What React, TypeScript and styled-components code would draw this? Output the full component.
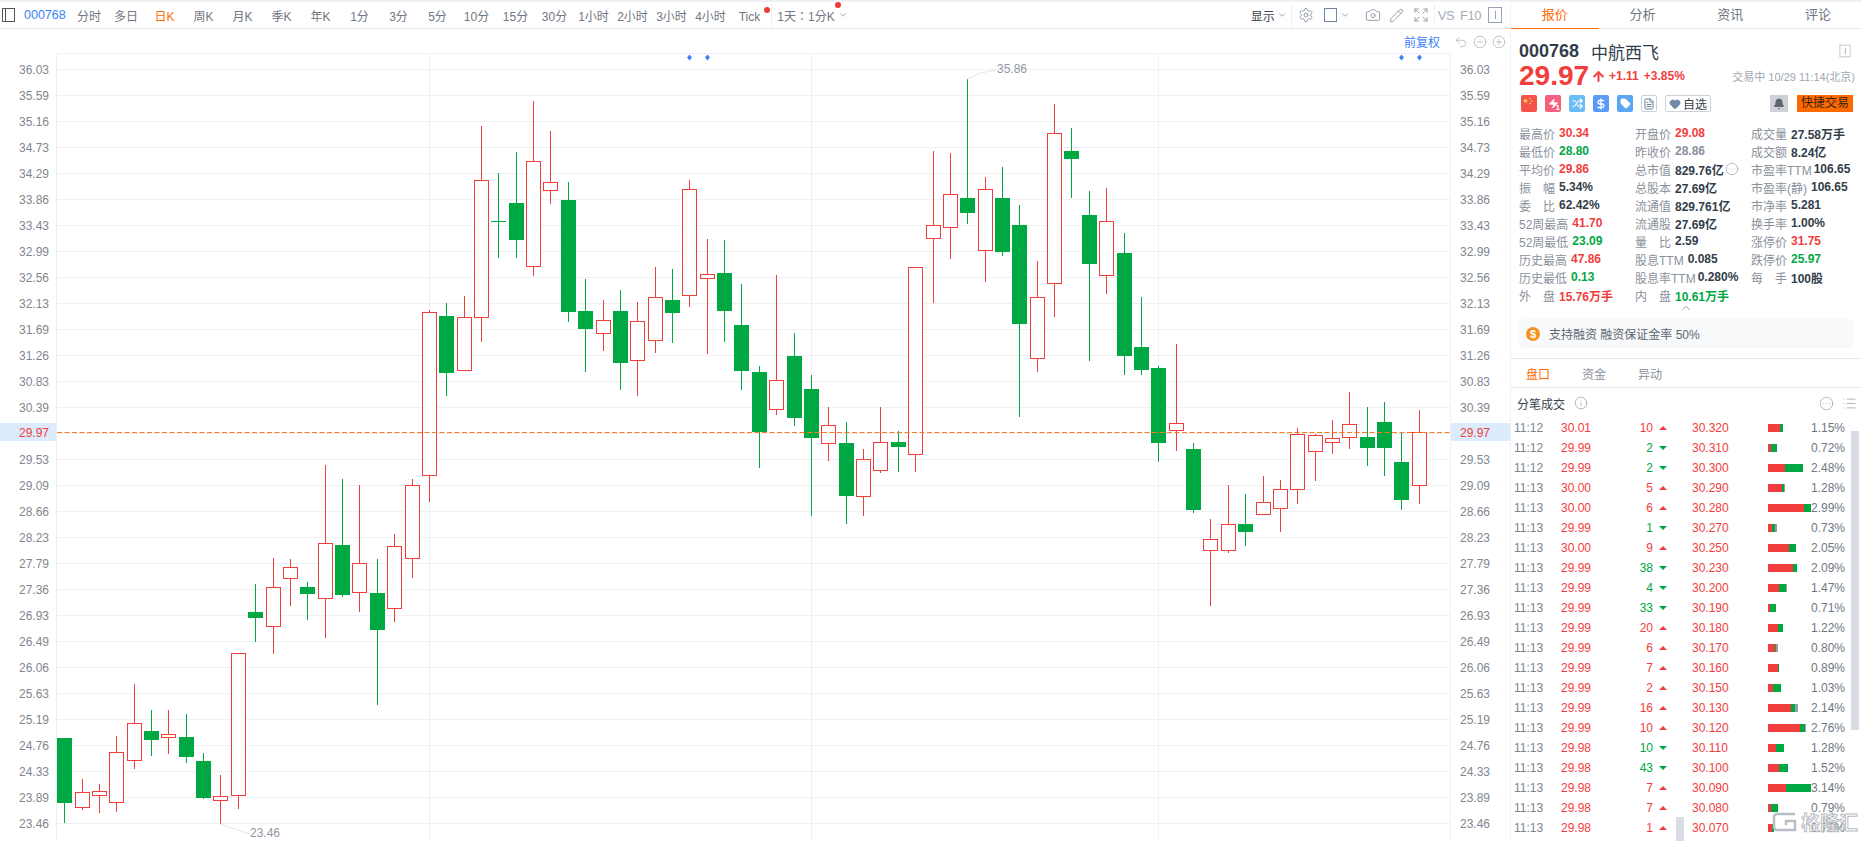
import React from "react"
import styled, { createGlobalStyle } from "styled-components"
import {
  ArrowUp, Bell, Camera, ChevronDown, ChevronUp, CircleEllipsis, CircleMinus, CirclePlus,
  DollarSign, Expand, FileText, Heart, Info, List, Pencil, Settings, Shuffle, Tag, Undo2, Zap,
} from "lucide-react"

const RED = "#f23d3d"
const GREEN = "#00a843"
const GREY = "#8a919c"
const DARK = "#333d4a"
const ORANGE = "#ff6a00"
const BLUE = "#3b82f6"
const GRID = "#eef0f4"

const GlobalStyle = createGlobalStyle`
  html, body { margin: 0; padding: 0; background: #fff; }
  body { font-family: "Liberation Sans", "Noto Sans CJK SC", sans-serif; font-size: 12px; overflow: hidden; }
`

// x, colour, wick top, body top, body bottom, wick bottom (page pixels)
const candles: [number, "r" | "g", number, number, number, number][] = [
  [64, "g", 738, 738, 803, 823], [82, "r", 779, 792, 808, 810], [99, "r", 784, 791, 796, 813],
  [116, "r", 736, 752, 803, 812], [134, "r", 684, 723, 761, 769], [151, "g", 710, 731, 740, 756],
  [168, "r", 710, 734, 738, 754], [186, "g", 714, 737, 757, 763], [203, "g", 753, 761, 798, 799],
  [220, "r", 775, 796, 801, 824], [238, "r", 653, 653, 796, 809], [255, "g", 584, 612, 618, 642],
  [273, "r", 558, 587, 627, 654], [290, "r", 559, 567, 579, 606], [307, "g", 582, 587, 594, 620],
  [325, "r", 465, 543, 599, 638], [342, "g", 479, 545, 595, 597], [359, "r", 485, 563, 593, 612],
  [377, "g", 559, 593, 630, 705], [394, "r", 534, 546, 609, 622], [412, "r", 479, 485, 559, 578],
  [429, "r", 310, 312, 476, 502], [446, "g", 303, 316, 373, 396], [464, "r", 296, 317, 371, 371],
  [481, "r", 126, 180, 318, 342], [498, "g", 173, 221, 222, 258], [516, "g", 152, 203, 240, 258],
  [533, "r", 101, 161, 267, 276], [550, "r", 131, 182, 191, 204], [568, "g", 182, 200, 312, 322],
  [585, "g", 279, 311, 329, 372], [603, "r", 300, 320, 334, 351], [620, "g", 290, 311, 363, 390],
  [637, "r", 302, 321, 361, 396], [655, "r", 267, 297, 341, 353], [672, "g", 269, 300, 313, 343],
  [689, "r", 180, 189, 296, 307], [707, "r", 239, 274, 279, 354], [724, "g", 240, 273, 311, 342],
  [741, "g", 284, 325, 371, 390], [759, "g", 366, 372, 432, 468], [776, "r", 275, 380, 410, 415],
  [794, "g", 333, 356, 418, 426], [811, "g", 375, 389, 438, 516], [828, "r", 407, 425, 444, 461],
  [846, "g", 422, 443, 496, 524], [863, "r", 449, 459, 497, 516], [880, "r", 407, 442, 471, 473],
  [898, "g", 431, 442, 447, 472], [915, "r", 267, 267, 455, 472], [933, "r", 151, 225, 239, 303],
  [950, "r", 153, 194, 228, 259], [967, "g", 79, 198, 213, 224], [985, "r", 177, 189, 251, 282],
  [1002, "g", 167, 198, 252, 256], [1019, "g", 205, 225, 324, 417], [1037, "r", 261, 297, 359, 372],
  [1054, "r", 104, 133, 284, 317], [1071, "g", 128, 151, 159, 198], [1089, "g", 191, 215, 264, 361],
  [1106, "r", 188, 221, 276, 294], [1124, "g", 233, 253, 356, 375], [1141, "g", 297, 347, 370, 375],
  [1158, "g", 366, 368, 443, 462], [1176, "r", 344, 423, 431, 451], [1193, "g", 443, 449, 510, 513],
  [1210, "r", 519, 539, 551, 606], [1228, "r", 485, 524, 551, 553], [1245, "g", 494, 524, 532, 546],
  [1263, "r", 476, 502, 515, 515], [1280, "r", 480, 489, 509, 532], [1297, "r", 428, 434, 490, 504],
  [1315, "r", 434, 435, 452, 481], [1332, "r", 420, 438, 443, 454], [1349, "r", 392, 424, 438, 449],
  [1367, "g", 407, 437, 448, 466], [1384, "g", 402, 422, 448, 476], [1401, "g", 432, 462, 500, 510],
  [1419, "r", 410, 432, 486, 504],
]

const axis = [
  "36.03", "35.59", "35.16", "34.73", "34.29", "33.86", "33.43", "32.99", "32.56", "32.13",
  "31.69", "31.26", "30.83", "30.39", "29.97", "29.53", "29.09", "28.66", "28.23", "27.79",
  "27.36", "26.93", "26.49", "26.06", "25.63", "25.19", "24.76", "24.33", "23.89", "23.46",
]

const periods: { label: string; w: number; active?: boolean; dot?: boolean }[] = [
  { label: "分时", w: 36 }, { label: "多日", w: 38 }, { label: "日K", w: 39, active: true },
  { label: "周K", w: 39 }, { label: "月K", w: 39 }, { label: "季K", w: 39 }, { label: "年K", w: 39 },
  { label: "1分", w: 39 }, { label: "3分", w: 39 }, { label: "5分", w: 39 }, { label: "10分", w: 39 },
  { label: "15分", w: 39 }, { label: "30分", w: 39 }, { label: "1小时", w: 39 }, { label: "2小时", w: 39 },
  { label: "3小时", w: 39 }, { label: "4小时", w: 39 }, { label: "Tick", w: 39, dot: true },
]

type Tone = "r" | "g" | "d" | "m"
type Stat = { k: string; v: string; t: Tone; tight?: boolean; more?: boolean }

const stats: Stat[][] = [
  [
    { k: "最高价", v: "30.34", t: "r" }, { k: "最低价", v: "28.80", t: "g" }, { k: "平均价", v: "29.86", t: "r" },
    { k: "振幅", v: "5.34%", t: "d" }, { k: "委比", v: "62.42%", t: "d" }, { k: "52周最高", v: "41.70", t: "r" },
    { k: "52周最低", v: "23.09", t: "g" }, { k: "历史最高", v: "47.86", t: "r" }, { k: "历史最低", v: "0.13", t: "g" },
    { k: "外盘", v: "15.76万手", t: "r" },
  ],
  [
    { k: "开盘价", v: "29.08", t: "r" }, { k: "昨收价", v: "28.86", t: "m" }, { k: "总市值", v: "829.76亿", t: "d", more: true },
    { k: "总股本", v: "27.69亿", t: "d" }, { k: "流通值", v: "829.761亿", t: "d" }, { k: "流通股", v: "27.69亿", t: "d" },
    { k: "量比", v: "2.59", t: "d" }, { k: "股息TTM", v: "0.085", t: "d" }, { k: "股息率TTM", v: "0.280%", t: "d", tight: true },
    { k: "内盘", v: "10.61万手", t: "g" },
  ],
  [
    { k: "成交量", v: "27.58万手", t: "d" }, { k: "成交额", v: "8.24亿", t: "d" }, { k: "市盈率TTM", v: "106.65", t: "d", tight: true },
    { k: "市盈率(静)", v: "106.65", t: "d" }, { k: "市净率", v: "5.281", t: "d" }, { k: "换手率", v: "1.00%", t: "d" },
    { k: "涨停价", v: "31.75", t: "r" }, { k: "跌停价", v: "25.97", t: "g" }, { k: "每手", v: "100股", t: "d" },
  ],
]

// time, price, volume, up?, avg, pct, [red, green, grey] bar widths
const trades: [string, string, number, boolean, string, string, number, number, number][] = [
  ["11:12", "30.01", 10, true, "30.320", "1.15%", 12, 3, 0],
  ["11:12", "29.99", 2, false, "30.310", "0.72%", 3, 6, 0],
  ["11:12", "29.99", 2, false, "30.300", "2.48%", 17, 18, 0],
  ["11:13", "30.00", 5, true, "30.290", "1.28%", 14, 2, 1],
  ["11:13", "30.00", 6, true, "30.280", "2.99%", 36, 7, 0],
  ["11:13", "29.99", 1, false, "30.270", "0.73%", 4, 3, 2],
  ["11:13", "30.00", 9, true, "30.250", "2.05%", 21, 7, 0],
  ["11:13", "29.99", 38, false, "30.230", "2.09%", 25, 4, 0],
  ["11:13", "29.99", 4, false, "30.200", "1.47%", 11, 7, 1],
  ["11:13", "29.99", 33, false, "30.190", "0.71%", 2, 6, 0],
  ["11:13", "29.99", 20, true, "30.180", "1.22%", 10, 5, 0],
  ["11:13", "29.99", 6, true, "30.170", "0.80%", 7, 1, 2],
  ["11:13", "29.99", 7, true, "30.160", "0.89%", 10, 1, 0],
  ["11:13", "29.99", 2, true, "30.150", "1.03%", 5, 8, 0],
  ["11:13", "29.99", 16, true, "30.130", "2.14%", 23, 4, 3],
  ["11:13", "29.99", 10, true, "30.120", "2.76%", 32, 5, 1],
  ["11:13", "29.98", 10, false, "30.110", "1.28%", 8, 8, 0],
  ["11:13", "29.98", 43, false, "30.100", "1.52%", 11, 9, 0],
  ["11:13", "29.98", 7, true, "30.090", "3.14%", 18, 25, 0],
  ["11:13", "29.98", 7, true, "30.080", "0.79%", 3, 7, 0],
  ["11:13", "29.98", 1, true, "30.070", "0.73%", 4, 2, 0],
]

function toneColor(t: Tone) {
  if (t === "r") return RED
  if (t === "g") return GREEN
  if (t === "m") return GREY
  return DARK
}

function KChart() {
  return (
    <ChartSvg viewBox="0 29 1510 812">
      {axis.map((a, i) => {
        const y = 69.5 + i * 26
        return <line key={a} x1={57} x2={1450} y1={y} y2={y} stroke={GRID} strokeWidth={1} />
      })}
      <line x1={57} x2={1450} y1={53.5} y2={53.5} stroke={GRID} />
      {[56.5, 429.5, 811.5, 1158.5, 1450.5].map((x) => (
        <line key={x} x1={x} x2={x} y1={53} y2={841} stroke={GRID} />
      ))}

      {candles.map(([x, c, wt, bt, bb, wb]) => {
        const cx = x + 0.5
        const color = c === "r" ? RED : GREEN
        return (
          <g key={x} shapeRendering="crispEdges">
            <line x1={cx} x2={cx} y1={wt} y2={bt} stroke={color} />
            <line x1={cx} x2={cx} y1={bb} y2={wb} stroke={color} />
            {c === "r" ? (
              <rect x={cx - 7} y={bt + 0.5} width={14} height={Math.max(bb - bt - 1, 1)} fill="#fff" stroke={color} />
            ) : (
              <rect x={cx - 7.5} y={bt} width={15} height={bb - bt} fill={color} />
            )}
          </g>
        )
      })}

      <line x1={57} x2={1450} y1={432.5} y2={432.5} stroke="#ff7a1a" strokeDasharray="5 2.5" />

      <rect x={0} y={423} width={56} height={18} fill="#dcecfd" />
      <rect x={1451} y={423} width={59} height={18} fill="#dcecfd" />
      {axis.map((a, i) => {
        const y = 73.5 + i * 26 - (i === 14 ? 1 : 0)
        const fill = i === 14 ? RED : "#7f8791"
        return (
          <g key={a} fill={fill} fontSize={12}>
            <text x={19} y={y}>{a}</text>
            <text x={1460} y={y}>{a}</text>
          </g>
        )
      })}

      <path d="M967.5 79 Q980 72 996 70" fill="none" stroke="#e4e7ec" />
      <text x={997} y={73} fontSize={12} fill="#8f98a5">35.86</text>
      <path d="M220.5 824 Q234 829 249 834" fill="none" stroke="#e4e7ec" />
      <text x={250} y={837} fontSize={12} fill="#8f98a5">23.46</text>

      {[689.5, 707.5, 1401.5, 1419.5].map((x) => (
        <path key={x} d={`M${x} 54.5 L${x + 2.5} 57.5 L${x} 60.5 L${x - 2.5} 57.5 Z`} fill={BLUE} />
      ))}
    </ChartSvg>
  )
}

function PanelGlyph() {
  return (
    <svg width="14" height="16" viewBox="0 0 14 16" fill="none" stroke="#9aa3af">
      <rect x="0.5" y="0.5" width="13" height="15" />
      <path d="M7.5 4v8" />
    </svg>
  )
}

function FlagBadge() {
  return (
    <svg width="16" height="17" viewBox="0 0 16 17">
      <rect width="16" height="17" rx="2" fill="#f4514a" />
      <path d="M4.5 3l.8 2h2l-1.6 1.3.6 2-1.8-1.2-1.8 1.2.6-2L1.7 5h2z" fill="#ffd84a" />
      <circle cx="9" cy="3.5" r="0.8" fill="#ffd84a" />
      <circle cx="10.5" cy="6" r="0.8" fill="#ffd84a" />
      <circle cx="9" cy="8.5" r="0.8" fill="#ffd84a" />
    </svg>
  )
}

export default function App() {
  return (
    <Page>
      <GlobalStyle />
      <ChartPane>
        <Toolbar>
          <LeftToggle />
          <CodeLink>000768</CodeLink>
          <Periods>
            {periods.map((p) => (
              <Period key={p.label} $w={p.w} $active={p.active}>
                {p.label}
                {p.dot && <RedDot $top={-3} $right={-1} />}
              </Period>
            ))}
          </Periods>
          <Divider $ml={2} />
          <RangePeriod $w={58} $ml={5}>
            1天：1分K
            <RedDot $top={-5} $right={-6} />
          </RangePeriod>
          <Tool $ml={3}><ChevronDown size={10} color={GREY} /></Tool>

          <ToolRight>
            <ShowText>显示</ShowText>
            <Tool $ml={2}><ChevronDown size={10} color={GREY} /></Tool>
            <Divider $ml={4} />
            <Tool $ml={6}><Settings size={16} color="#8f98a5" strokeWidth={1.4} /></Tool>
            <SquareToggle />
            <Tool $ml={3}><ChevronDown size={10} color={GREY} /></Tool>
            <Tool $ml={15}><Camera size={16} color="#8f98a5" strokeWidth={1.4} /></Tool>
            <Tool $ml={8}><Pencil size={15} color="#8f98a5" strokeWidth={1.4} /></Tool>
            <Tool $ml={9}><Expand size={16} color="#8f98a5" strokeWidth={1.4} /></Tool>
            <Divider $ml={5} />
            <ToolText $ml={3}>VS</ToolText>
            <ToolText $ml={6}>F10</ToolText>
            <Tool $ml={7}><PanelGlyph /></Tool>
          </ToolRight>
        </Toolbar>

        <ChartArea>
          <KChart />
          <ChartControls>
            <AdjustLink>前复权</AdjustLink>
            <Undo2 size={14} color="#a4acb8" strokeWidth={1.2} />
            <CircleMinus size={14} color="#a4acb8" strokeWidth={1.2} />
            <CirclePlus size={14} color="#a4acb8" strokeWidth={1.2} />
          </ChartControls>
        </ChartArea>
      </ChartPane>

      <QuotePanel>
        <TopTabs>
          <TopTab $active>报价</TopTab>
          <TopTab>分析</TopTab>
          <TopTab>资讯</TopTab>
          <TopTab>评论</TopTab>
        </TopTabs>

        <NameRow>
          <StockCode>000768</StockCode>
          <StockName>中航西飞</StockName>
          <NameIcon><PanelGlyph /></NameIcon>
        </NameRow>

        <PriceRow>
          <Price>29.97</Price>
          <ArrowUp size={15} color={RED} strokeWidth={3.2} />
          <Change>+1.11</Change>
          <Change>+3.85%</Change>
          <TradeTime>交易中 10/29 11:14(北京)</TradeTime>
        </PriceRow>

        <BadgeRow>
          <FlagBadge />
          <Badge $bg="#f6607f">
            <Zap size={11} color="#fff" fill="#fff" strokeWidth={1} />
            <BadgeOne>1</BadgeOne>
          </Badge>
          <Badge $bg="#6cbcf7"><Shuffle size={11} color="#fff" strokeWidth={2.6} /></Badge>
          <Badge $bg="#5b9bf5"><DollarSign size={12} color="#fff" strokeWidth={2.6} /></Badge>
          <Badge $bg="#5aa6f5"><Tag size={11} color="#fff" fill="#fff" strokeWidth={1.5} /></Badge>
          <Badge $bg="#fff" $outline><FileText size={12} color="#6b7f99" strokeWidth={2} /></Badge>
          <WatchButton>
            <Heart size={12} color="#6d8aa8" fill="#6d8aa8" />
            自选
          </WatchButton>
          <BellBox><Bell size={12} color="#5f6670" fill="#5f6670" /></BellBox>
          <TradeButton>快捷交易</TradeButton>
        </BadgeRow>

        <StatsGrid>
          {stats.map((col) =>
            col.map((s) => (
              <StatCell key={s.k}>
                <StatLabel>{s.k}</StatLabel>
                <StatValue $color={toneColor(s.t)} $tight={s.tight}>{s.v}</StatValue>
                {s.more && <MoreDot><CircleEllipsis size={14} color="#9aa3af" strokeWidth={1.2} /></MoreDot>}
              </StatCell>
            ))
          )}
        </StatsGrid>

        <Collapse><ChevronUp size={14} color="#8d9bb0" strokeWidth={1.6} /></Collapse>

        <MarginNote>
          <Coin>$</Coin>
          支持融资 融资保证金率 50%
        </MarginNote>

        <SubTabs>
          <SubTab $active>盘口</SubTab>
          <SubTab>资金</SubTab>
          <SubTab>异动</SubTab>
        </SubTabs>

        <TradesHead>
          分笔成交
          <InfoIcon><Info size={14} color="#9aa3af" strokeWidth={1.3} /></InfoIcon>
          <HeadRight>
            <CircleEllipsis size={15} color="#9aa3af" strokeWidth={1.2} />
            <List size={15} color="#9aa3af" strokeWidth={1.2} />
          </HeadRight>
        </TradesHead>

        {trades.map((t, i) => (
          <TradeRow key={i}>
            <TradeClock>{t[0]}</TradeClock>
            <span>{t[1]}</span>
            <TradeVolume $up={t[3]}>{t[2]}</TradeVolume>
            <Arrow $up={t[3]} />
            <span>{t[4]}</span>
            <BarCell>
              <BarPiece $color={RED} style={{ width: t[6] }} />
              <BarPiece $color={GREEN} style={{ width: t[7] }} />
              <BarPiece $color="#9aa0a8" style={{ width: t[8] }} />
            </BarCell>
            <TradePct>{t[5]}</TradePct>
          </TradeRow>
        ))}

        <ScrollThumb />
        <StrayThumb />
        <Watermark>
          <svg width="26" height="22" viewBox="0 0 26 22" fill="none" stroke="#b9bec6" strokeWidth="2.5">
            <path d="M23 3H4L2 5v12l2 2h19V10h-9v4" />
          </svg>
          格隆汇
        </Watermark>
      </QuotePanel>
    </Page>
  )
}

const Page = styled.div`
  display: flex;
  width: 1862px;
  height: 841px;
  box-sizing: border-box;
  padding-top: 2px;
  background: #eef1f5;
  overflow: hidden;
`
const ChartPane = styled.div`
  width: 1510px;
  display: flex;
  flex-direction: column;
  background: #fff;
`
const Toolbar = styled.div`
  height: 26px;
  display: flex;
  align-items: center;
  padding-left: 2px;
  background: #fff;
  border-bottom: 1px solid #e6e9ee;
  color: #6f7782;
`
const LeftToggle = styled.div`
  width: 11px;
  height: 12px;
  border: 1px solid #555;
  border-left-width: 1px;
  box-shadow: inset 2px 0 0 #fff, inset 3px 0 0 #555;
`
const CodeLink = styled.span`
  margin-left: 9px;
  width: 47px;
  color: ${BLUE};
  font-size: 12.5px;
`
const Periods = styled.div`
  display: flex;
  align-items: baseline;
`
const Period = styled.span<{ $w: number; $active?: boolean; $ml?: number }>`
  position: relative;
  width: ${(p) => p.$w}px;
  margin-left: ${(p) => p.$ml ?? 0}px;
  text-align: center;
  white-space: nowrap;
  color: ${(p) => (p.$active ? ORANGE : "#6f7782")};
`
const RangePeriod = styled(Period)`
  font-family: "Liberation Sans", "Noto Sans CJK TC", sans-serif;
`
const RedDot = styled.i<{ $top: number; $right: number }>`
  position: absolute;
  top: ${(p) => p.$top}px;
  right: ${(p) => p.$right}px;
  width: 6px;
  height: 6px;
  border-radius: 50%;
  background: #f03a3a;
`
const Divider = styled.span<{ $ml: number }>`
  width: 1px;
  height: 22px;
  margin-left: ${(p) => p.$ml}px;
  background: #eceef2;
`
const Tool = styled.span<{ $ml: number }>`
  display: flex;
  margin-left: ${(p) => p.$ml}px;
`
const ToolRight = styled.div`
  display: flex;
  align-items: center;
  margin-left: auto;
  padding-right: 8px;
`
const ShowText = styled.span`
  color: #39424e;
`
const SquareToggle = styled.span`
  width: 11px;
  height: 12px;
  margin-left: 10px;
  border: 1px solid #6f86a3;
`
const ToolText = styled.span<{ $ml: number }>`
  margin-left: ${(p) => p.$ml}px;
  font-size: 13px;
  letter-spacing: -0.5px;
  color: #a4acb8;
`
const ChartArea = styled.div`
  position: relative;
  flex: 1;
`
const ChartSvg = styled.svg`
  display: block;
  width: 1510px;
  height: 812px;
  font-family: "Liberation Sans", sans-serif;
`
const ChartControls = styled.div`
  position: absolute;
  top: 4px;
  right: 4px;
  display: flex;
  align-items: center;
  gap: 5px;
`
const AdjustLink = styled.span`
  margin-right: 9px;
  color: ${BLUE};
`
const QuotePanel = styled.div`
  position: relative;
  width: 352px;
  box-sizing: border-box;
  border-left: 1px solid #eef1f5;
  background: #fff;
  overflow: hidden;
`
const TopTabs = styled.div`
  display: flex;
  height: 26px;
  border-bottom: 1px solid #e6e9ee;
`
const TopTab = styled.div<{ $active?: boolean }>`
  position: relative;
  width: 88px;
  line-height: 25px;
  text-align: center;
  font-size: 13px;
  color: ${(p) => (p.$active ? ORANGE : "#6f7782")};
  box-shadow: ${(p) => (p.$active ? `0 1px 0 ${ORANGE}` : "none")};
`
const NameRow = styled.div`
  display: flex;
  align-items: center;
  height: 22px;
  margin-top: 11px;
  padding-left: 8px;
`
const StockCode = styled.span`
  font-size: 18px;
  font-weight: 700;
  color: ${DARK};
`
const StockName = styled.span`
  margin-left: 12px;
  font-size: 17px;
  color: ${DARK};
`
const NameIcon = styled.span`
  display: flex;
  margin-left: auto;
  margin-right: 10px;
  transform: scale(0.8);
`
const PriceRow = styled.div`
  display: flex;
  align-items: center;
  height: 24px;
  margin-top: 2px;
  padding-left: 8px;
  padding-right: 7px;
`
const Price = styled.span`
  font-size: 28px;
  font-weight: 700;
  color: ${RED};
  margin-right: 2px;
`
const Change = styled.span`
  margin-left: 3px;
  padding-right: 2px;
  font-weight: 700;
  color: ${RED};
`
const TradeTime = styled.span`
  margin-left: auto;
  font-size: 11px;
  color: #a0a7b1;
`
const BadgeRow = styled.div`
  display: flex;
  align-items: center;
  gap: 8px;
  height: 17px;
  margin-top: 7px;
  padding-left: 10px;
`
const Badge = styled.span<{ $bg: string; $outline?: boolean }>`
  position: relative;
  display: flex;
  align-items: center;
  justify-content: center;
  box-sizing: border-box;
  width: 16px;
  height: 17px;
  border-radius: 2px;
  background: ${(p) => p.$bg};
  border: ${(p) => (p.$outline ? "1px solid #c9d0da" : "none")};
`
const BadgeOne = styled.b`
  position: absolute;
  right: 1px;
  bottom: 0;
  font-size: 8px;
  line-height: 9px;
  color: #fff;
`
const WatchButton = styled.span`
  display: flex;
  align-items: center;
  justify-content: center;
  gap: 2px;
  box-sizing: border-box;
  width: 46px;
  height: 17px;
  border: 1px solid #ccd2da;
  border-radius: 2px;
  color: #39424e;
`
const BellBox = styled.span`
  display: flex;
  align-items: center;
  justify-content: center;
  width: 18px;
  height: 17px;
  margin-left: 51px;
  background: #cdd1d6;
`
const TradeButton = styled.span`
  width: 56px;
  height: 17px;
  margin-left: 1px;
  line-height: 17px;
  text-align: center;
  background: ${ORANGE};
  color: #3a2412;
`
const StatsGrid = styled.div`
  display: grid;
  grid-auto-flow: column;
  grid-template-columns: 116px 116px 1fr;
  grid-template-rows: repeat(10, 18px);
  margin-top: 12px;
  padding-left: 8px;
`
const StatCell = styled.div`
  display: flex;
  align-items: center;
  white-space: nowrap;
`
const StatLabel = styled.span`
  min-width: 36px;
  color: ${GREY};
  text-align-last: justify;
`
const StatValue = styled.span<{ $color: string; $tight?: boolean }>`
  margin-left: ${(p) => (p.$tight ? "2px" : "4px")};
  font-weight: 700;
  color: ${(p) => p.$color};
`
const MoreDot = styled.span`
  display: flex;
  margin-left: 1px;
`
const Collapse = styled.div`
  display: flex;
  justify-content: center;
  height: 18px;
  padding-right: 2px;
  margin-top: -3px;
`
const MarginNote = styled.div`
  display: flex;
  align-items: center;
  gap: 9px;
  height: 29px;
  margin: 0 8px;
  padding-left: 7px;
  border-radius: 4px;
  background: #f8f9fb;
  color: #5c6570;
`
const Coin = styled.span`
  width: 14px;
  height: 14px;
  border-radius: 50%;
  background: #f5921e;
  color: #fff;
  font-size: 11px;
  font-weight: 700;
  line-height: 14px;
  text-align: center;
`
const SubTabs = styled.div`
  display: flex;
  height: 28px;
  margin-top: 10px;
  padding-left: 15px;
  gap: 32px;
  align-items: center;
  border-top: 1px solid #e6e9ee;
  border-bottom: 1px solid #e6e9ee;
`
const SubTab = styled.span<{ $active?: boolean }>`
  color: ${(p) => (p.$active ? ORANGE : GREY)};
`
const TradesHead = styled.div`
  display: flex;
  align-items: center;
  height: 30px;
  padding-left: 6px;
  color: #39424e;
`
const InfoIcon = styled.span`
  display: flex;
  margin-left: 9px;
`
const HeadRight = styled.span`
  display: flex;
  gap: 8px;
  margin-left: auto;
  margin-right: 5px;
`
const TradeRow = styled.div`
  display: grid;
  grid-template-columns: 47px 59px 33px 39px 76px 77px;
  align-items: center;
  height: 20px;
  padding-left: 3px;
  color: ${RED};
`
const TradeClock = styled.span`
  color: #7a828e;
`
const TradeVolume = styled.span<{ $up: boolean }>`
  text-align: right;
  color: ${(p) => (p.$up ? RED : GREEN)};
`
const Arrow = styled.i<{ $up: boolean }>`
  width: 0;
  height: 0;
  margin-left: 6px;
  border-left: 4px solid transparent;
  border-right: 4px solid transparent;
  border-top: ${(p) => (p.$up ? "none" : `4px solid ${GREEN}`)};
  border-bottom: ${(p) => (p.$up ? `4px solid ${RED}` : "none")};
`
const BarCell = styled.div`
  grid-column: 6;
  grid-row: 1;
  display: flex;
  height: 8px;
`
const BarPiece = styled.i<{ $color: string }>`
  display: block;
  height: 8px;
  flex: none;
  background: ${(p) => p.$color};
`
const TradePct = styled.span`
  grid-column: 6;
  grid-row: 1;
  justify-self: end;
  color: #6f7782;
`
const ScrollThumb = styled.div`
  position: absolute;
  top: 429px;
  right: 3px;
  width: 8px;
  height: 299px;
  background: #d8dde5;
`
const StrayThumb = styled.div`
  position: absolute;
  top: 815px;
  left: 165px;
  width: 8px;
  height: 30px;
  background: #d8dde5;
`
const Watermark = styled.div`
  position: absolute;
  top: 806px;
  left: 261px;
  display: flex;
  align-items: center;
  gap: 3px;
  font-size: 19px;
  font-weight: 700;
  color: rgba(255, 255, 255, 0.8);
  -webkit-text-stroke: 1px rgba(160, 165, 172, 0.75);
`
